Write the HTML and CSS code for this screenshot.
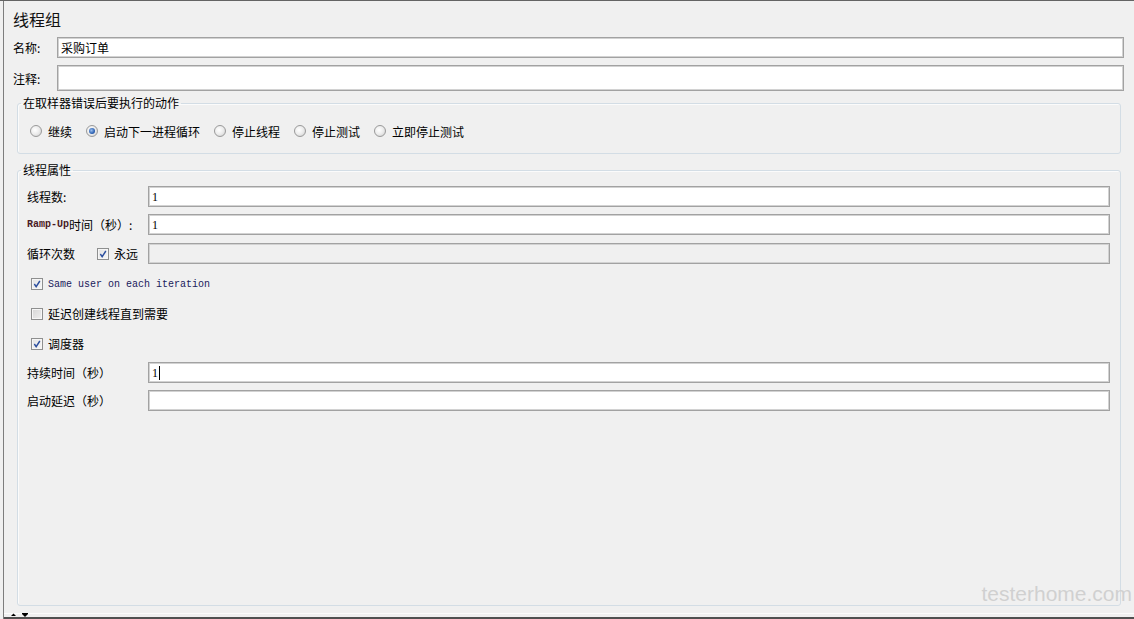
FILE: index.html
```html
<!DOCTYPE html>
<html lang="zh">
<head>
<meta charset="utf-8">
<title>线程组</title>
<link rel="stylesheet" href="styles.css">
</head>
<body>
<div class="window">
  <div class="panel">
    <div class="title">线程组</div>
    <div class="row name-row">
      <span class="lbl">名称:</span>
      <div class="field">采购订单</div>
    </div>
    <div class="row comment-row">
      <span class="lbl">注释:</span>
      <div class="field"></div>
    </div>

    <fieldset class="group g1">
      <legend>在取样器错误后要执行的动作</legend>
      <div class="radios">
        <span class="radio"><span class="circle"></span>继续</span>
        <span class="radio"><span class="circle on"></span>启动下一进程循环</span>
        <span class="radio"><span class="circle"></span>停止线程</span>
        <span class="radio"><span class="circle"></span>停止测试</span>
        <span class="radio"><span class="circle"></span>立即停止测试</span>
      </div>
    </fieldset>

    <fieldset class="group g2">
      <legend>线程属性</legend>
      <div class="props">
        <div class="prow">
          <span class="plbl">线程数:</span>
          <div class="field">1</div>
        </div>
        <div class="prow">
          <span class="plbl"><span class="mono-red">Ramp-Up</span>时间（秒）:</span>
          <div class="field">1</div>
        </div>
        <div class="prow loop">
          <span class="plbl">循环次数
            <span class="check on loop-check"><svg viewBox="0 0 12 12" width="12" height="12"><path d="M2.8 6 L5 9.2 L9.4 2.4" fill="none" stroke="#2c4f9e" stroke-width="1.7"/></svg></span>永远
          </span>
          <div class="field disabled"></div>
        </div>
        <div class="crow">
          <span class="check on"><svg viewBox="0 0 12 12" width="12" height="12"><path d="M2.8 6 L5 9.2 L9.4 2.4" fill="none" stroke="#2c4f9e" stroke-width="1.7"/></svg></span>
          <span class="mono-blue">Same user on each iteration</span>
        </div>
        <div class="crow">
          <span class="check"></span>
          <span>延迟创建线程直到需要</span>
        </div>
        <div class="crow">
          <span class="check on"><svg viewBox="0 0 12 12" width="12" height="12"><path d="M2.8 6 L5 9.2 L9.4 2.4" fill="none" stroke="#2c4f9e" stroke-width="1.7"/></svg></span>
          <span>调度器</span>
        </div>
        <div class="prow">
          <span class="plbl">持续时间（秒）</span>
          <div class="field">1<span class="caret"></span></div>
        </div>
        <div class="prow">
          <span class="plbl">启动延迟（秒）</span>
          <div class="field"></div>
        </div>
      </div>
      <div class="watermark">testerhome.com</div>
    </fieldset>

    <div class="footer">
      <svg class="arrows" viewBox="0 0 24 4" width="24" height="4">
        <path d="M4 3 L6.5 0.5 L9 3 Z" fill="#000"/>
        <path d="M15 0 H21 V1 L18 4 L15 1 Z" fill="#000"/>
      </svg>
    </div>
  </div>
</div>
</body>
</html>
```

FILE: styles.css
```css
* { box-sizing: border-box; }
html, body {
  margin: 0;
  padding: 0;
  background: #f0f0f0;
}
body {
  font-family: "Noto Sans CJK SC", "Noto Sans", sans-serif;
  font-size: 12px;
  color: #000;
}
.window {
  width: 1134px;
  height: 619px;
  border-top: 1px solid #646464;
  overflow: hidden;
}
.panel {
  margin-left: 3px;
  height: 618px;
  border-left: 1px solid #7d7d7d;
  padding: 0 10px 0 9px;
  display: flex;
  flex-direction: column;
}
.title {
  margin-top: 7px;
  height: 22px;
  line-height: 22px;
  font-size: 16px;
  color: #111;
}
.row {
  display: flex;
  align-items: center;
  margin-top: 7px;
}
.lbl {
  width: 44px;
  flex: none;
}
.name-row .field { height: 21px; }
.comment-row .field { height: 26px; }
.field {
  flex: 1;
  height: 21px;
  background: #fff;
  border: 1px solid #a2a2a2;
  box-shadow: inset 0 0 0 1px #d2d2d2;
  padding: 0 3px;
  display: flex;
  align-items: center;
  line-height: 16px;
}
.field.disabled { background: #f0f0f0; }
.prow .field {
  font-family: "Liberation Serif", serif;
  font-size: 12px;
}
.caret {
  display: inline-block;
  width: 1px;
  height: 14px;
  background: #000;
  margin-left: 1px;
}

.group {
  margin: 0 3px 0 4px;
  padding: 0;
  border: 1px solid #d3dde5;
  border-radius: 3px;
  box-shadow: inset 1px 1px 0 #fbfbfb;
  min-width: 0;
}
.group legend {
  margin-left: 3px;
  padding: 0 2px;
  line-height: 14px;
  height: 14px;
  font-size: 12px;
}
.g1 { margin-top: 5px; }
.radios {
  display: flex;
  align-items: center;
  gap: 14px;
  height: 16px;
  margin: 13px 0 14px 12px;
}
.radio {
  display: flex;
  align-items: center;
  gap: 6px;
}
.circle {
  width: 12px;
  height: 12px;
  border-radius: 50%;
  border: 1px solid #9a9a9a;
  background: radial-gradient(circle at 40% 40%, #ffffff 0%, #ececec 50%, #c9c9c9 100%);
  display: flex;
  align-items: center;
  justify-content: center;
}
.circle.on::after {
  content: "";
  width: 6px;
  height: 6px;
  border-radius: 50%;
  background: radial-gradient(circle at 40% 40%, #9cc0ef 0%, #2d62b3 60%, #1d3f86 100%);
}

.g2 {
  margin-top: 9px;
  flex: 1;
  position: relative;
}
.props {
  padding: 9px 10px 0 9px;
  display: flex;
  flex-direction: column;
  gap: 7px;
}
.prow {
  display: flex;
  align-items: center;
}
.prow.loop { margin-top: 1px; }
.plbl {
  width: 121px;
  flex: none;
  display: flex;
  align-items: center;
  white-space: nowrap;
}
.mono-red {
  font-family: "Liberation Mono", monospace;
  font-size: 10px;
  font-weight: bold;
  color: #4a1a24;
}
.mono-blue {
  font-family: "Liberation Mono", monospace;
  font-size: 10px;
  color: #1a1a5c;
  padding-top: 1px;
}
.loop-check { margin: 0 5px 0 22px; }
.crow {
  height: 23px;
  display: flex;
  align-items: center;
  gap: 5px;
  padding-left: 4px;
}
.crow:nth-child(4) { margin-top: 1px; }
.check {
  width: 12px;
  height: 12px;
  flex: none;
  border: 1px solid #8e8f8f;
  box-shadow: inset 0 0 0 1px #f6f6f6;
  background: linear-gradient(135deg, #e2e2e2, #f7f7f7);
  display: flex;
  align-items: center;
  justify-content: center;
}
.check svg {
  width: 10px;
  height: 10px;
}
.check:not(.on) {
  background: linear-gradient(135deg, #d6d6d6, #f0f0f0);
}
.watermark {
  position: absolute;
  right: -12px;
  bottom: -1px;
  font-family: "Liberation Sans", sans-serif;
  font-size: 21px;
  font-weight: 300;
  color: #d0d0d0;
  pointer-events: none;
}
.footer {
  margin-top: 7px;
  height: 6px;
  flex: none;
  border-top: 1px solid #fbfbfb;
  border-bottom: 2px solid #505050;
  margin-left: -9px;
  margin-right: -10px;
}
.arrows {
  display: block;
  margin-left: 3px;
  margin-top: -1px;
}
```
